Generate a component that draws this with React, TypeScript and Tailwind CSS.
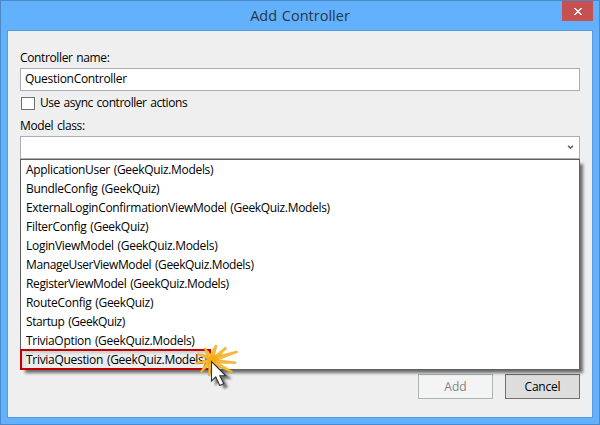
import React from "react";

const options = [
  { label: "ApplicationUser (GeekQuiz.Models)", cls: "tracking-[-0.32px]" },
  { label: "BundleConfig (GeekQuiz)", cls: "tracking-[-0.31px]" },
  { label: "ExternalLoginConfirmationViewModel (GeekQuiz.Models)", cls: "tracking-[-0.32px]" },
  { label: "FilterConfig (GeekQuiz)", cls: "tracking-[-0.29px]" },
  { label: "LoginViewModel (GeekQuiz.Models)", cls: "tracking-[-0.29px]" },
  { label: "ManageUserViewModel (GeekQuiz.Models)", cls: "tracking-[-0.37px]" },
  { label: "RegisterViewModel (GeekQuiz.Models)", cls: "tracking-[-0.37px]" },
  { label: "RouteConfig (GeekQuiz)", cls: "tracking-[-0.3px]" },
  { label: "Startup (GeekQuiz)", cls: "tracking-[-0.42px]" },
  { label: "TriviaOption (GeekQuiz.Models)", cls: "tracking-[-0.31px]" },
  { label: "TriviaQuestion (GeekQuiz.Models)", cls: "tracking-[-0.3px]" },
];

function ClickCursor() {
  return (
    <svg className="absolute left-[175px] top-[184px]" width="44" height="50" viewBox="0 0 44 50">
      <defs>
        <filter id="soft" x="-40%" y="-40%" width="180%" height="180%">
          <feGaussianBlur stdDeviation="1.3" />
        </filter>
      </defs>
      <g fill="#f9bd35" stroke="#dc9810" strokeWidth="0.5">
        <path d="M12 14 L19.500 1 L21 1.500 L18 14 Z" />
        <path d="M16 14 L29.500 3 L30.500 4.500 L20 16 Z" />
        <path d="M17 13 L41 7 L41.500 8.500 L19 17 Z" />
        <path d="M16 15 L40 18 L40 19.500 L18 19 Z" />
        <path d="M17 16 L37 27.500 L36 29 L16 20 Z" />
        <path d="M18 17 L5 29 L4 28 L12 16 Z" />
        <path d="M17 18.500 L0 20 L0 18.500 L13 15 Z" />
        <path d="M16 17 L1 10.500 L2 9.500 L17 13 Z" />
        <path d="M17 13 L9 3.500 L8 4.500 L13 16 Z" />
        <path d="M16 17 L14 32 L12.500 31.500 L12.500 16 Z" />
      </g>
      <path d="M11 16 L14 12 L20 11 L22 15 L19 20 L13 20 Z" fill="#f6ab17" />
      <path
        d="M19 21v21l5-5 4 8 4-2-4-8h8z"
        fill="#000"
        opacity="0.5"
        filter="url(#soft)"
      />
      <path
        d="M15.500 17.500v19.500l4.300-4 3.900 8.600 4.100-1.800-4-8h6z"
        fill="#fff"
        stroke="#333"
        strokeWidth="1.100"
      />
    </svg>
  );
}

export default function App() {
  return (
    <div className="flex h-[425px] w-[600px] flex-col border border-[#4a88c6] bg-[#63b1fd] pb-[6px] pl-[6px] pr-[6px] font-['Open_Sans','Noto_Sans',sans-serif] text-[12px] text-black [word-spacing:1px]">
      <header className="flex h-[29px] shrink-0 items-start">
        <h1 className="flex-1 pl-[31px] pt-[4px] text-center text-[14.500px] leading-[21px] text-[#263747]">
          Add Controller
        </h1>
        <button className="flex h-5 w-[31px] items-center justify-center bg-[#c75050]" aria-label="Close">
          <svg width="8" height="7" viewBox="0 0 8 7" shapeRendering="crispEdges" fill="#fff">
            <path d="M0 0h2v1H0zM6 0h2v1H6zM1 1h2v1H1zM5 1h2v1H5zM2 2h4v1H2zM3 3h2v1H3zM2 4h4v1H2zM1 5h2v1H1zM5 5h2v1H5zM0 6h2v1H0zM6 6h2v1H6z" />
          </svg>
        </button>
      </header>

      <main className="flex flex-1 flex-col border border-[#5399dc] bg-[#efefef] px-3">
        <label className="mt-[18px] h-[19px] leading-[18px] tracking-[-0.37px]">Controller name:</label>
        <div className="flex h-[23px] border border-[#abadb3] bg-white pl-1 leading-5 tracking-[-0.3px]">
          QuestionController
        </div>
        <div className="mt-[6px] flex h-[13px] pl-px">
          <span className="h-[13px] w-[14px] border border-[#707070] bg-white" />
          <span className="pl-[5px] leading-[12px] tracking-[-0.44px]">Use async controller actions</span>
        </div>
        <label className="mt-[7px] h-[19px] leading-[18px] tracking-[-0.38px]">Model class:</label>
        <div className="flex h-[23px] items-start justify-end border border-[#abadb3] bg-white pr-[5px] pt-[8px]">
          <svg width="7" height="5" viewBox="0 0 7 5">
            <path d="M1 .8 3.500 3.300 6 .8" fill="none" stroke="#606060" strokeWidth="1.500" />
          </svg>
        </div>
        <ul className="relative h-[211px] border border-[#5f5f63] bg-white shadow-[4px_4px_3px_-1px_rgba(0,0,0,0.55)]">
          {options.map((o, i) => (
            <li
              key={o.label}
              className={
                i === options.length - 1
                  ? "-ml-px -mt-px flex h-[21px] w-[191px] items-center border-2 border-[#c00000] bg-[#ededed] pl-1 shadow-[inset_4px_3px_3px_-1px_rgba(0,0,0,0.15),inset_3px_0_0_#fff]"
                  : "flex h-[19px] items-center pl-[5px]"
              }
            >
              <span className={`whitespace-nowrap pt-px ${o.cls}`}>{o.label}</span>
            </li>
          ))}
          <li aria-hidden="true">
            <ClickCursor />
          </li>
        </ul>
        <div className="mt-1 flex justify-end gap-3">
          <button className="h-[25px] w-[75px] border border-[#adb2b5] bg-[#f4f4f4] text-[#838383]">Add</button>
          <button className="h-[25px] w-[75px] border border-[#707070] bg-[#dddddd] tracking-[-0.2px]">Cancel</button>
        </div>
      </main>
    </div>
  );
}
